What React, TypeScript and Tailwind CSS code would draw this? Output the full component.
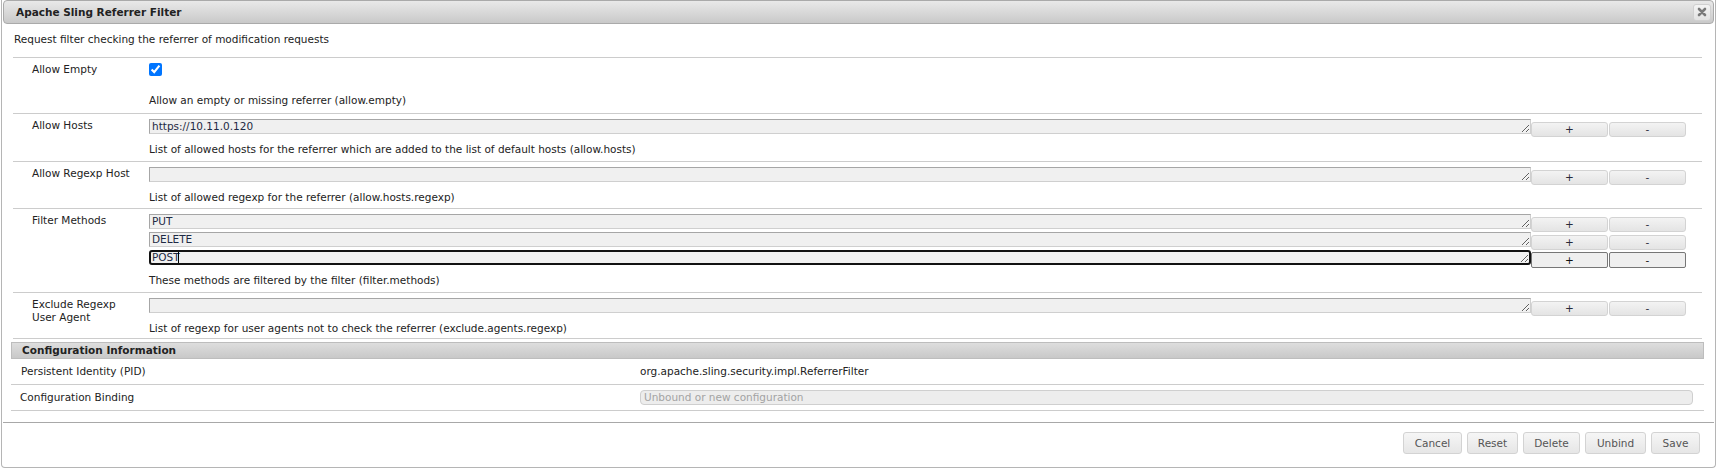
import React from "react";

type Field = {
  label: string[];
  values: string[];
  desc: string;
  h: string;
  focusLast?: boolean;
};

const fields: Field[] = [
  {
    label: ["Allow Hosts"],
    values: ["https://10.11.0.120"],
    desc: "List of allowed hosts for the referrer which are added to the list of default hosts (allow.hosts)",
    h: "h-[48px]",
  },
  {
    label: ["Allow Regexp Host"],
    values: [""],
    desc: "List of allowed regexp for the referrer (allow.hosts.regexp)",
    h: "h-[47px]",
  },
  {
    label: ["Filter Methods"],
    values: ["PUT", "DELETE", "POST"],
    desc: "These methods are filtered by the filter (filter.methods)",
    h: "h-[84px]",
    focusLast: true,
  },
  {
    label: ["Exclude Regexp", "User Agent"],
    values: [""],
    desc: "List of regexp for user agents not to check the referrer (exclude.agents.regexp)",
    h: "h-[46px]",
  },
];

function SmallButton({ children, focused }: { children: React.ReactNode; focused?: boolean }) {
  if (focused) {
    return (
      <button className="mt-[2px] h-[16px] w-[77px] shrink-0 rounded-[2px] border border-[#767676] bg-[#efefef] text-[10.5px] leading-[13px] text-[#111]">
        {children}
      </button>
    );
  }
  return (
    <button className="mt-[3px] h-[15px] w-[77px] shrink-0 rounded-[3px] border border-[#d3d3d3] bg-gradient-to-b from-[#f3f3f3] to-[#e4e4e4] text-[10.5px] leading-[13px] text-[#2a2a3a]">
      {children}
    </button>
  );
}

function ValueLine({ value, focused }: { value: string; focused?: boolean }) {
  return (
    <div className="flex h-[18px] items-start pr-[16px]">
      <div className="relative flex-1">
        <textarea
          rows={1}
          defaultValue={value}
          className={
            focused
              ? "block h-[15px] w-full overflow-hidden rounded-[3px] border-2 border-[#111] bg-[#f0f0f0] px-[1px] py-0 text-[10.5px] leading-[11px] text-[#1e2a44] outline-none"
              : "block h-[15px] w-full overflow-hidden border border-[#a6a6a6] border-b-[#cfcfcf] border-r-[#cfcfcf] bg-[#f0f0f0] px-[2px] py-0 text-[10.5px] leading-[13px] text-[#1e2a44] outline-none"
          }
        />
        {focused && <span className="absolute left-[29px] top-[2px] h-[11px] w-px bg-black" />}
      </div>
      <SmallButton focused={focused}>+</SmallButton>
      <div className="w-px" />
      <SmallButton focused={focused}>-</SmallButton>
    </div>
  );
}

function FooterButton({ label, w }: { label: string; w: string }) {
  return (
    <button
      className={`${w} h-[22px] rounded-[3px] border border-[#d3d3d3] bg-gradient-to-b from-[#f6f6f6] to-[#e6e6e6] text-[10.5px] text-[#555]`}
    >
      {label}
    </button>
  );
}

export default function App() {
  return (
    <div className="h-[471px] w-full overflow-hidden bg-white font-['DejaVu_Sans',sans-serif] text-[10.5px] leading-[13px] text-[#222]">
      <div className="ml-[1px] flex h-[468px] w-[1715px] flex-col rounded-b-[4px] border-x border-b border-[#b5b5b5] px-[1px]">
        {/* title bar */}
        <div className="flex h-[24px] shrink-0 items-center justify-between rounded-[4px] border border-[#aaaaaa] bg-gradient-to-b from-[#e9e9e9] to-[#c9c9c9] pl-[12px] pr-[2px]">
          <span className="font-bold text-[#222]">Apache Sling Referrer Filter</span>
          <button className="flex h-[17px] w-[18px] items-center justify-center rounded-[3px] border border-[#d0d0d0] bg-gradient-to-b from-[#f4f4f4] to-[#e2e2e2]">
            <svg width="10" height="10" viewBox="0 0 10 10">
              <path d="M2 2 L8 8 M8 2 L2 8" stroke="#7a7a7a" strokeWidth="2.6" strokeLinecap="round" />
            </svg>
          </button>
        </div>

        {/* description */}
        <div className="h-[33px] shrink-0 pl-[11px] pt-[9px]">Request filter checking the referrer of modification requests</div>

        {/* properties */}
        <div className="ml-[10px] mr-[12px] border-b border-[#cccccc]">
          <div className="flex h-[56px] border-t border-[#cccccc]">
            <div className="w-[136px] shrink-0 pl-[19px] pt-[5px]">Allow Empty</div>
            <div className="flex-1 pt-[5px]">
              <input type="checkbox" defaultChecked className="m-0 block h-[13px] w-[13px] accent-[#0075ff]" />
              <div className="mt-[18px] leading-[12px]">Allow an empty or missing referrer (allow.empty)</div>
            </div>
          </div>
          {fields.map((f) => (
            <div key={f.label.join(" ")} className={`flex ${f.h} border-t border-[#cccccc]`}>
              <div className="w-[136px] shrink-0 pl-[19px] pt-[5px]">
                {f.label.map((l) => (
                  <div key={l}>{l}</div>
                ))}
              </div>
              <div className="flex-1 pt-[5px]">
                {f.values.map((v, i) => (
                  <ValueLine key={i} value={v} focused={f.focusLast && i === f.values.length - 1} />
                ))}
                <div className="mt-[6px] leading-[12px]">{f.desc}</div>
              </div>
            </div>
          ))}
        </div>

        {/* configuration information */}
        <div className="ml-[8px] mr-[10px] mt-[3px]">
          <div className="flex h-[17px] items-center border border-[#bdbdbd] bg-gradient-to-b from-[#dedede] to-[#c8c8c8] pl-[10px] font-bold text-[#222]">
            Configuration Information
          </div>
          <div className="flex h-[26px] items-center border-b border-[#cccccc]">
            <div className="w-[629px] shrink-0 pl-[10px]">Persistent Identity (PID)</div>
            <div className="flex-1">org.apache.sling.security.impl.ReferrerFilter</div>
          </div>
          <div className="flex h-[26px] items-center border-b border-[#cccccc]">
            <div className="w-[629px] shrink-0 pl-[9px]">Configuration Binding</div>
            <div className="flex-1 pr-[11px]">
              <div className="h-[15px] rounded-[4px] border border-[#cfcfcf] bg-[#ededed] pl-[3px] leading-[13px] text-[#a3a3a3]">
                Unbound or new configuration
              </div>
            </div>
          </div>
        </div>

        {/* footer */}
        <div className="mt-[11px] flex flex-1 justify-end gap-[5px] border-t border-[#a8a8a8] pr-[14px] pt-[9px]">
          <FooterButton label="Cancel" w="w-[59px]" />
          <FooterButton label="Reset" w="w-[51px]" />
          <FooterButton label="Delete" w="w-[57px]" />
          <FooterButton label="Unbind" w="w-[61px]" />
          <FooterButton label="Save" w="w-[49px]" />
        </div>
      </div>
    </div>
  );
}
